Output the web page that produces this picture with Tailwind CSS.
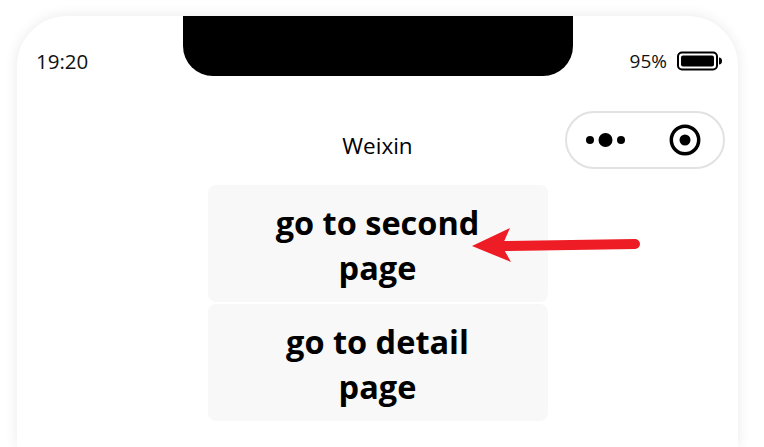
<!DOCTYPE html>
<html lang="en">
<head>
    <meta charset="UTF-8">
    <title>Weixin</title>
    <script src="https://cdn.jsdelivr.net/npm/@tailwindcss/browser@4"></script>
</head>
<body class="bg-white h-[447px] w-[764px] overflow-hidden font-['Open_Sans',sans-serif] text-black">

<div class="mt-4 ml-[17px] w-[721px] h-[431px] overflow-hidden rounded-t-[50px] bg-white shadow-[0_0_14px_rgba(0,0,0,0.09)] relative">
    <!-- notch -->
    <div class="absolute top-0 left-[166px] w-[390px] h-[60px] bg-black rounded-b-[30px]"></div>

    <!-- status bar -->
    <div class="flex items-center justify-between h-[60px] pt-[30px] pl-[19px] pr-[16px]">
        <span class="text-[20.500px] leading-none text-[#111]">19:20</span>
        <div class="flex items-center gap-[10px]">
            <span class="text-[19px] leading-none text-[#111]">95%</span>
            <svg width="45" height="20" viewBox="0 0 45 20">
                <rect x="1" y="1.5" width="39" height="17" rx="4" fill="none" stroke="#000" stroke-width="2"/>
                <rect x="4" y="4.5" width="33" height="11" rx="2" fill="#000"/>
                <path d="M42 6.5c2 0 3 1.500 3 3.500s-1 3.500-3 3.500z" fill="#000"/>
            </svg>
        </div>
    </div>

    <!-- nav bar -->
    <div class="relative flex items-center justify-center h-[58px] mt-[35px]">
        <span class="text-[22.500px] leading-none pt-[12px]">Weixin</span>
        <div class="absolute right-[13px] top-0 w-[160px] h-[58px] rounded-full border-2 border-[#e2e2e2] flex items-center justify-between pl-[19px] pr-[22px]">
            <svg width="42" height="16" viewBox="0 0 42 16">
                <circle cx="4" cy="8" r="4" fill="#000"/>
                <circle cx="19.500" cy="8" r="7" fill="#000"/>
                <circle cx="35" cy="8" r="4" fill="#000"/>
            </svg>
            <svg width="32" height="32" viewBox="0 0 32 32">
                <circle cx="16" cy="16" r="13.700" fill="none" stroke="#000" stroke-width="3.500"/>
                <circle cx="16" cy="16" r="5.500" fill="#000"/>
            </svg>
        </div>
    </div>

    <!-- buttons -->
    <div class="flex flex-col items-center gap-[2px] mt-4">
        <button class="w-[340px] h-[117px] rounded-lg bg-[#f8f8f8] text-[32.500px] leading-[45px] font-bold px-[50px] pt-[2px]">go to second page</button>
        <button class="w-[340px] h-[117px] rounded-lg bg-[#f8f8f8] text-[32.500px] leading-[45px] font-bold px-[50px] pt-[2px]">go to detail page</button>
    </div>

    <!-- annotation arrow -->
    <svg class="absolute left-[450px] top-[212px]" width="180" height="40" viewBox="0 0 180 40">
        <path d="M36 18L168 16" stroke="#ee1c25" stroke-width="10" stroke-linecap="round" fill="none"/>
        <path d="M5 18L43 0L35 18L44 34z" fill="#ee1c25"/>
    </svg>
</div>

</body>
</html>
